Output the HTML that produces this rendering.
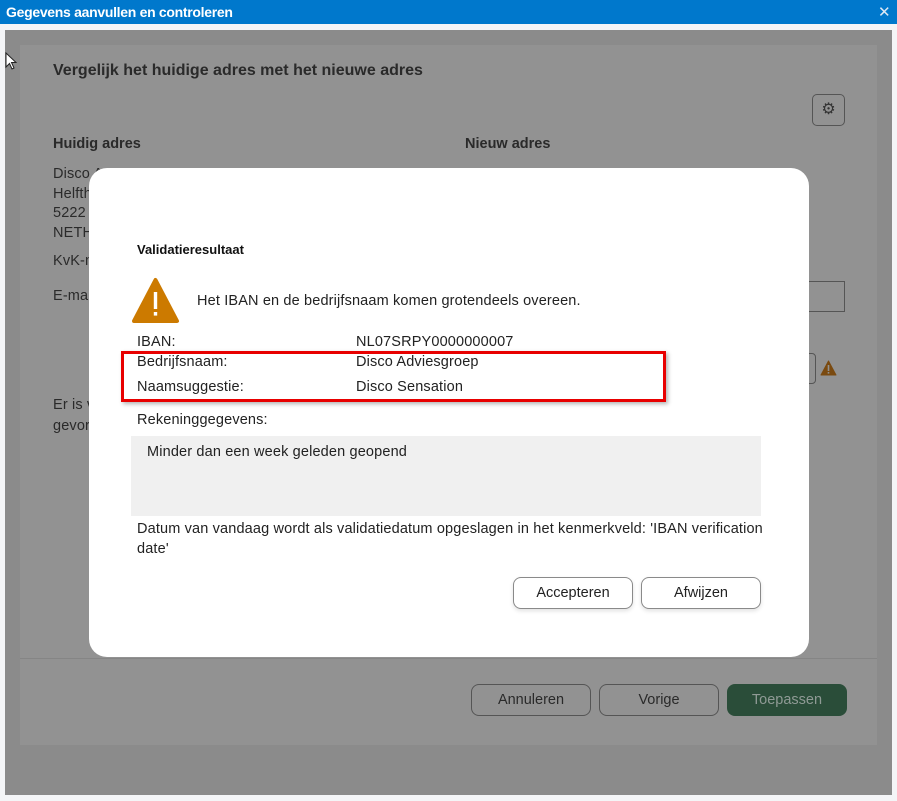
<!DOCTYPE html>
<html><head><meta charset="utf-8"><style>
*{margin:0;padding:0;box-sizing:border-box}
body{width:897px;height:801px;position:relative;overflow:hidden;background:#f4f5f7;font-family:"Liberation Sans",sans-serif;color:#222}
.a{position:absolute;white-space:nowrap}
.t{font-size:14.5px;color:#222;letter-spacing:0.15px}
.g{color:#2a2a2a}
.btn{position:absolute;border:1px solid #8a8a8a;border-radius:8px;background:#fff;font-size:14.5px;text-align:center;line-height:30px;color:#222;box-shadow:0 2px 4px rgba(0,0,0,.12)}
.gb{position:absolute;border:1px solid #555;border-radius:8px;font-size:14.5px;text-align:center;line-height:30px;color:#2a2a2a}
</style></head><body>
<div class="a" style="left:0;top:0;width:897px;height:24px;background:#0078cc"></div>
<div class="a" style="left:6px;top:4px;font-size:14px;color:#fff;font-weight:bold;letter-spacing:-0.3px">Gegevens aanvullen en controleren</div>
<div class="a" style="left:878px;top:3px;font-size:15px;color:#dde8f4;font-weight:normal">✕</div>
<div class="a" style="left:5px;top:30px;width:887px;height:765px;background:#8b8b8b"></div>
<div class="a" style="left:20px;top:45px;width:857px;height:700px;background:#929292"></div>
<div class="a" style="left:20px;top:658px;width:857px;height:1px;background:#858585"></div>
<div class="a" style="left:53px;top:62px;font-size:16px;font-weight:bold;color:#2a2a2a">Vergelijk het huidige adres met het nieuwe adres</div>
<div class="a" style="left:812px;top:94px;width:33px;height:32px;border:1px solid #555;border-radius:5px;color:#333;font-size:16px;text-align:center;line-height:30px">⚙</div>
<div class="a" style="left:53px;top:136px;font-size:14.5px;font-weight:bold;color:#2a2a2a">Huidig adres</div>
<div class="a" style="left:465px;top:136px;font-size:14.5px;font-weight:bold;color:#2a2a2a">Nieuw adres</div>
<div class="a t g" style="left:53px;top:165px;line-height:19.5px">Disco A<br>Helfth<br>5222<br>NETH</div>
<div class="a t g" style="left:53px;top:253px">KvK-n</div>
<div class="a t g" style="left:53px;top:288px">E-mai</div>
<div class="a t g" style="left:53px;top:397px">Er is v</div>
<div class="a t g" style="left:53px;top:418px">gevor</div>
<div class="a" style="left:780px;top:281px;width:65px;height:31px;border:1px solid #555"></div>
<div class="a" style="left:780px;top:353px;width:36px;height:31px;border:1px solid #555;border-radius:4px"></div>
<svg class="a" style="left:820px;top:360px" width="17" height="16"><path d="M8.5 1 L16 15 L1 15 Z" fill="#7a4a10" stroke="#7a4a10" stroke-linejoin="round"/><rect x="7.7" y="5" width="1.6" height="6" fill="#929292"/><rect x="7.7" y="12" width="1.6" height="1.6" fill="#929292"/></svg>
<div class="gb" style="left:471px;top:684px;width:120px;height:32px">Annuleren</div>
<div class="gb" style="left:599px;top:684px;width:120px;height:32px">Vorige</div>
<div class="a" style="left:727px;top:684px;width:120px;height:32px;background:#2a4d39;border-radius:8px;color:#8f9a95;font-size:14.5px;text-align:center;line-height:32px">Toepassen</div>

<div class="a" style="left:89px;top:168px;width:720px;height:489px;background:#fff;border-radius:18px"></div>
<div class="a" style="left:137px;top:242px;font-size:13px;font-weight:bold;color:#111">Validatieresultaat</div>
<svg class="a" style="left:131px;top:276px" width="49" height="49"><path d="M24.5 4 L46 45 L3 45 Z" fill="#cc7a00" stroke="#cc7a00" stroke-width="4" stroke-linejoin="round"/><rect x="22.8" y="16" width="3.4" height="17" fill="#fff"/><rect x="22.8" y="36" width="3.4" height="3.6" fill="#fff"/></svg>
<div class="a t" style="left:197px;top:293px">Het IBAN en de bedrijfsnaam komen grotendeels overeen.</div>
<div class="a t" style="left:137px;top:334px">IBAN:</div>
<div class="a t" style="left:356px;top:334px">NL07SRPY0000000007</div>
<div class="a" style="left:121px;top:351px;width:545px;height:51px;border:3px solid #e80000;box-shadow:2px 2px 4px rgba(0,0,0,.3)"></div>
<div class="a t" style="left:137px;top:354px">Bedrijfsnaam:</div>
<div class="a t" style="left:356px;top:354px">Disco Adviesgroep</div>
<div class="a t" style="left:137px;top:379px">Naamsuggestie:</div>
<div class="a t" style="left:356px;top:379px">Disco Sensation</div>
<div class="a t" style="left:137px;top:412px">Rekeninggegevens:</div>
<div class="a" style="left:131px;top:436px;width:630px;height:80px;background:#f0f0f0"></div>
<div class="a t" style="left:147px;top:444px">Minder dan een week geleden geopend</div>
<div class="a t" style="left:137px;top:519px;line-height:20px">Datum van vandaag wordt als validatiedatum opgeslagen in het kenmerkveld: 'IBAN verification<br>date'</div>
<div class="btn" style="left:513px;top:577px;width:120px;height:32px">Accepteren</div>
<div class="btn" style="left:641px;top:577px;width:120px;height:32px">Afwijzen</div>
<svg class="a" style="left:5px;top:52px" width="14" height="20"><path d="M1 1 L1 15 L4.5 11.5 L7 17 L9 16 L6.5 10.5 L11 10.5 Z" fill="#fff" stroke="#222" stroke-width="1"/></svg>
</body></html>
